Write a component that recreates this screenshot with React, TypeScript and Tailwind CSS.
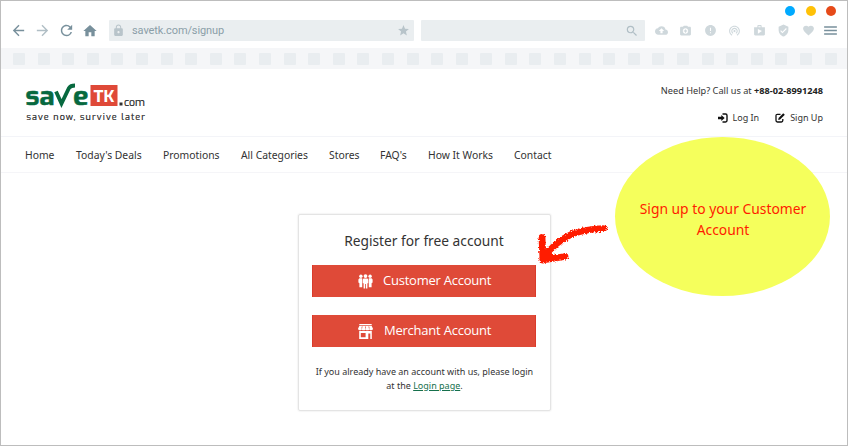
import React from "react";
import {
  MdArrowBack, MdArrowForward, MdRefresh, MdHome, MdLock, MdStar, MdSearch, MdBackup,
  MdCameraEnhance, MdError, MdWifiTethering, MdShop, MdVerifiedUser, MdFavorite, MdMenu,
} from "react-icons/md";

const toolbarIcons = [MdBackup, MdCameraEnhance, MdError, MdWifiTethering, MdShop, MdVerifiedUser, MdFavorite];

const navItems = [
  { label: "Home", width: 30 },
  { label: "Today's Deals", width: 66 },
  { label: "Promotions", width: 57 },
  { label: "All Categories", width: 67 },
  { label: "Stores", width: 30 },
  { label: "FAQ's", width: 27 },
  { label: "How It Works", width: 65 },
  { label: "Contact", width: 38 },
];

function BrowserBar() {
  return (
    <div>
      <div className="flex h-[18px] items-end justify-end gap-[10.5px] pr-[11px] pb-[3px]">
        <span className="size-[10px] rounded-full bg-[#00aaff]" />
        <span className="size-[10px] rounded-full bg-[#ffc107]" />
        <span className="size-[10px] rounded-full bg-[#e64a19]" />
      </div>
      <div className="mt-px flex h-[21px] items-center text-[#78909c]">
        <div className="flex w-[108px] shrink-0 items-center pl-[9px]">
          <MdArrowBack size={17} />
          <MdArrowForward size={17} className="ml-[7px] text-[#b0bec5]" />
          <MdRefresh size={17} className="ml-[7px]" />
          <MdHome size={16} className="ml-[7px]" />
        </div>
        <div className="flex h-[21px] w-[305px] shrink-0 items-center rounded-[1px] bg-[#eaeef0] pr-[4px] pl-[3px]">
          <MdLock size={13} className="text-[#b8c4ca]" />
          <span className="mt-px ml-[7px] font-['Roboto',sans-serif] text-[11px] tracking-[-0.1px] text-[#8a9ea8]">savetk.com/signup</span>
          <MdStar size={13} className="ml-auto text-[#b8c4ca]" />
        </div>
        <div className="ml-[7px] flex h-[21px] w-[224px] shrink-0 items-center justify-end rounded-[1px] bg-[#eaeef0] pr-[6px]">
          <MdSearch size={14} className="text-[#b0bec5]" />
        </div>
        <div className="ml-[9.5px] flex items-center gap-[11.5px] text-[#cfd8dc]">
          {toolbarIcons.map((Icon, i) => (
            <Icon key={i} size={13} />
          ))}
        </div>
        <MdMenu size={17} className="ml-[7px]" />
      </div>
      <div className="mt-[7px] flex h-[21px] items-center justify-between bg-[#f5f6f8] pr-[10px] pl-[12px]">
        {Array.from({ length: 34 }, (_, i) => (
          <span key={i} className="size-[12px] rounded-[1px] bg-[#e9edf0]" />
        ))}
      </div>
    </div>
  );
}

function Logo() {
  return (
    <svg className="mt-[13px] ml-[24px] h-[42px] w-[122px] overflow-visible" viewBox="25 82 122 42">
      <g fontFamily="Exo, 'Open Sans', sans-serif">
        <g fill="#07693f" stroke="#07693f" strokeWidth=".5" fontWeight="700">
          <text x="25.5" y="105" fontSize="26" textLength="29" lengthAdjust="spacingAndGlyphs">sa</text>
          <text x="73" y="105" fontSize="26" textLength="15.5" lengthAdjust="spacingAndGlyphs">e</text>
        </g>
        <path d="M56 91.5L61.5 103.5L69 88Q70.5 85.5 75 85.5" fill="none" stroke="#07693f" strokeWidth="3.8" />
        <rect x="90.5" y="85" width="27" height="21" fill="#df4938" />
        <text x="93.5" y="102" fontSize="17" fontWeight="700" fill="#fff" textLength="21" lengthAdjust="spacingAndGlyphs">TK</text>
        <rect x="119.5" y="102.5" width="3" height="3" fill="#333" />
        <text x="124" y="105.7" fontSize="10.5" fill="#222" stroke="#222" strokeWidth=".2" textLength="21" lengthAdjust="spacingAndGlyphs">com</text>
        <text x="26.5" y="119.8" fontSize="9" fill="#222" stroke="#222" strokeWidth=".2" textLength="118.5" lengthAdjust="spacing">save now, survive later</text>
      </g>
    </svg>
  );
}

function LoginIcon() {
  return (
    <svg width="10" height="10" viewBox="0 0 10 10" className="shrink-0">
      <path d="M4.5 1H7.6Q9 1 9 2.4V7.6Q9 9 7.6 9H4.5" fill="none" stroke="#111" strokeWidth="1.4" />
      <path d="M0 3.8H3.3V2L6.7 5L3.3 8V6.2H0Z" fill="#111" />
    </svg>
  );
}

function EditIcon() {
  return (
    <svg width="10" height="10" viewBox="0 0 10 10" className="shrink-0">
      <path d="M5.5 1.3H2.4Q1 1.3 1 2.7V7.6Q1 9 2.4 9H6.4Q7.8 9 7.8 7.6V6" fill="none" stroke="#111" strokeWidth="1.3" />
      <path d="M3.6 5.1L8.2 .3L9.8 1.8L5.1 6.6L3.2 7Z" fill="#111" />
    </svg>
  );
}

function PeopleIcon() {
  return (
    <svg width="15" height="15" viewBox="0 0 15 15" fill="#fff">
      <circle cx="2.9" cy="2.2" r="1.7" />
      <circle cx="12.1" cy="2.2" r="1.7" />
      <path d="M1.4 4.2H4.2V13.2H1.4V9.3L.4 8.4V5.4Z M13.6 4.2H10.8V13.2H13.6V9.3L14.6 8.4V5.4Z" />
      <circle cx="7.5" cy="2.1" r="1.9" />
      <path d="M5.8 4.4H9.2Q10.3 4.7 10.3 6V9.2H9.4V14.5H7.9V10H7.1V14.5H5.6V9.2H4.7V6Q4.7 4.7 5.8 4.4Z" />
    </svg>
  );
}

function StoreIcon() {
  return (
    <svg width="15" height="15" viewBox="0 0 15 15" fill="#fff">
      <path d="M1.3 0H13.7V1.3H1.3Z" />
      <path d="M1.3 2H13.7L15 4.8Q14.7 6.3 13.2 6.3Q12 6.3 11.3 5.4Q10.6 6.3 9.4 6.3Q8.2 6.3 7.5 5.4Q6.8 6.3 5.6 6.3Q4.4 6.3 3.7 5.4Q3 6.3 1.8 6.3Q.3 6.3 0 4.8Z" />
      <path d="M4.2 2.4L3.7 4.6M7.5 2.4V4.6M10.8 2.4L11.3 4.6" stroke="#df4938" strokeWidth=".7" />
      <path fillRule="evenodd" d="M1.2 7H13.8V15H12.3V9.6H10.3V15H1.2Z M2.8 9V13.2H7.6V9Z" />
    </svg>
  );
}

function AccountButton({ icon, label, spacing }: { icon: React.ReactNode; label: string; spacing: string }) {
  return (
    <button className="flex h-[32px] w-[224px] items-center border-x border-[#da3b2b] bg-[#df4a38] pl-[45px] font-['Open_Sans',sans-serif] text-[13px] font-medium text-white">
      {icon}
      <span className={"whitespace-nowrap " + spacing}>{label}</span>
    </button>
  );
}

export default function App() {
  return (
    <div className="relative h-[446px] w-[848px] overflow-hidden border border-[#bdbdbd] bg-white font-['Noto_Sans','Open_Sans',sans-serif] text-[#333]">
      <BrowserBar />
      <header className="flex h-[68px] justify-between border-b border-[#f3f4f8]">
        <Logo />
        <div className="flex flex-col items-end pt-[14px] pr-[24px] text-[9px]">
          <p className="h-[15px] text-[9.2px] leading-[15px] whitespace-nowrap">Need Help? Call us at <b className="text-[#222]">+88-02-8991248</b></p>
          <div className="mt-[12px] flex h-[15px] items-center">
            <LoginIcon />
            <span className="ml-[5px]">Log In</span>
            <span className="ml-[16px] flex"><EditIcon /></span>
            <span className="ml-[5px]">Sign Up</span>
          </div>
        </div>
      </header>
      <nav className="flex h-[36px] items-center gap-[21px] border-b border-[#f5f5f8] pt-[2px] pl-[24px] text-[10.35px]">
        {navItems.map((item) => (
          <a key={item.label} className="shrink-0 whitespace-nowrap" style={{ width: item.width }}>{item.label}</a>
        ))}
      </nav>
      <main className="flex pt-[41px] pl-[297px]">
        <section className="flex h-[197px] w-[253px] flex-col items-center rounded-[2px] border border-[#e4e4e4] pt-[16px] pr-px shadow-[0_0_2px_#ddd]">
          <h1 className="mb-[14px] h-[20px] text-[13.75px] leading-[20px] whitespace-nowrap">Register for free account</h1>
          <AccountButton icon={<PeopleIcon />} label="Customer Account" spacing="ml-[10px] tracking-[-0.23px]" />
          <div className="h-[18px]" />
          <AccountButton icon={<StoreIcon />} label="Merchant Account" spacing="ml-[11px] tracking-[-0.23px]" />
          <p className="mt-[18px] pl-px text-center text-[9px] leading-[14px] whitespace-nowrap">
            If you already have an account with us, please login<br />at the <a className="text-[#16704c] underline">Login page</a>.
          </p>
        </section>
      </main>
      <div className="absolute top-[136px] left-[614px] flex h-[159px] w-[215px] items-center justify-center rounded-[50%] bg-[#f5ff5c] pl-px text-center text-[13.85px] leading-[21px] text-[#ff1c00]">
        <p className="mt-[5px]">Sign up to your Customer<br />Account</p>
      </div>
      <svg className="absolute top-[214px] left-[529px]" width="90" height="55" viewBox="0 0 90 55">
        <defs>
          <filter id="chalk" x="-10%" y="-10%" width="120%" height="120%">
            <feTurbulence type="fractalNoise" baseFrequency="0.9" numOctaves="2" seed="4" />
            <feDisplacementMap in="SourceGraphic" scale="4" xChannelSelector="R" yChannelSelector="G" />
          </filter>
        </defs>
        <g filter="url(#chalk)" fill="none" stroke="#ff1c00" strokeLinecap="round" strokeLinejoin="round">
          <path d="M74 13.5Q56 14 42 19Q25 27 13 43" strokeWidth="6.5" />
          <path d="M12 22.5L13 45L35 41.5" strokeWidth="6.8" />
          <path d="M12 45L19 36L24 42Z" fill="#ff1c00" strokeWidth="2" />
        </g>
      </svg>
    </div>
  );
}
